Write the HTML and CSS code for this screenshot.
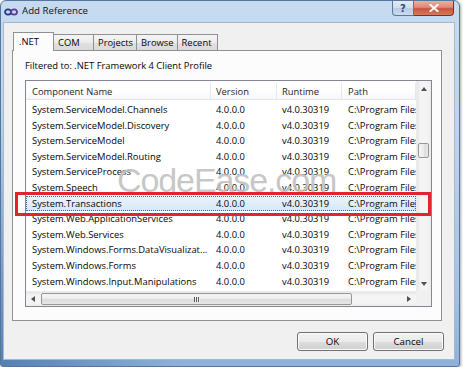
FILE: index.html
```html
<!DOCTYPE html>
<html lang="en">
<head>
    <meta charset="UTF-8">
    <title>Add Reference</title>
    <link rel="stylesheet" href="styles.css">
</head>
<body>
    <div class="window">
        <!-- Title bar -->
        <div class="titlebar">
            <svg class="app-icon" viewBox="0 0 14 8">
                <ellipse cx="4" cy="4" rx="3" ry="2.6" fill="none" stroke="#223a86" stroke-width="1.8"/>
                <ellipse cx="10" cy="4" rx="3" ry="2.6" fill="none" stroke="#5b3d96" stroke-width="1.8"/>
            </svg>
            <span class="title">Add Reference</span>
            <div class="caption-buttons">
                <div class="cap-btn help">?</div>
                <div class="cap-btn close">
                    <svg viewBox="0 0 10 8" width="10" height="8">
                        <path d="M1.5 1 L8.5 7 M8.5 1 L1.5 7" stroke="#fff" stroke-width="2" stroke-linecap="square"/>
                    </svg>
                </div>
            </div>
        </div>

        <div class="client">
            <!-- Tabs -->
            <div class="tabs">
                <div class="tab active">.NET</div>
                <div class="tab">COM</div>
                <div class="tab">Projects</div>
                <div class="tab">Browse</div>
                <div class="tab">Recent</div>
            </div>

            <div class="tab-panel">
                <div class="filter">Filtered to: .NET Framework 4 Client Profile</div>

                <div class="listbox">
                    <div class="list-main">
                        <div class="list-header">
                            <div class="cell name">Component Name</div>
                            <div class="cell version">Version</div>
                            <div class="cell runtime">Runtime</div>
                            <div class="cell path">Path</div>
                        </div>
                        <div id="rows" class="list-rows"></div>
                    </div>

                    <div class="vscroll">
                        <div class="sb-btn"><span class="arrow up"></span></div>
                        <div class="sb-track">
                            <div class="thumb-v"></div>
                        </div>
                        <div class="sb-btn"><span class="arrow down"></span></div>
                    </div>

                    <div class="hscroll">
                        <div class="sb-btn"><span class="arrow left"></span></div>
                        <div class="thumb-h"><span class="grip"></span></div>
                        <div class="sb-btn end"><span class="arrow right"></span></div>
                    </div>

                    <div class="corner"></div>
                </div>
            </div>

            <div class="actions">
                <button class="dlg-button">OK</button>
                <button class="dlg-button">Cancel</button>
            </div>
        </div>

        <!-- Overlays -->
        <div class="watermark">CodeEase.com</div>
        <div class="callout"></div>
    </div>

    <script>
        // Assembly list
        const components = [
            'System.ServiceModel.Channels',
            'System.ServiceModel.Discovery',
            'System.ServiceModel',
            'System.ServiceModel.Routing',
            'System.ServiceProcess',
            'System.Speech',
            'System.Transactions',
            'System.Web.ApplicationServices',
            'System.Web.Services',
            'System.Windows.Forms.DataVisualizat...',
            'System.Windows.Forms',
            'System.Windows.Input.Manipulations'
        ];
        const selected = 'System.Transactions';
        const rows = document.getElementById('rows');

        components.forEach(name => {
            const row = document.createElement('div');
            row.className = name === selected ? 'list-row selected' : 'list-row';
            row.innerHTML = `
                <div class="cell name">${name}</div>
                <div class="cell version">4.0.0.0</div>
                <div class="cell runtime">v4.0.30319</div>
                <div class="cell path">C:\\Program Files (x86)\\Reference Assemblies</div>
            `;
            rows.appendChild(row);
        });
    </script>
</body>
</html>
```

FILE: styles.css
```css
* {
    margin: 0;
    padding: 0;
    box-sizing: border-box;
}

body {
    background: #fff;
    font-family: "Open Sans", "Noto Sans", sans-serif;
    font-size: 9.4px;
    color: #050505;
}

.window {
    position: relative;
    width: 460px;
    height: 367px;
    border: 1px solid #56779d;
    border-radius: 6px 6px 3px 3px;
    background:
        radial-gradient(ellipse 180px 260px at 0% 100%, rgba(40, 85, 150, 0.55), rgba(40, 85, 150, 0) 100%),
        linear-gradient(to bottom, #c7dbf0 0%, #bcd3ec 40%, #a3c2e3 80%, #8db1d9 100%);
    box-shadow: 1px 1px 3px rgba(0, 0, 0, 0.35);
    display: flex;
    flex-direction: column;
}

/* Title bar */
.titlebar {
    height: 21px;
    display: flex;
    align-items: flex-start;
    padding-left: 3px;
    padding-right: 5px;
}

.app-icon {
    width: 14px;
    height: 8px;
    margin-top: 7px;
}

.title {
    margin-left: 4px;
    font-size: 9.7px;
    line-height: 20px;
    color: #111;
}

.caption-buttons {
    margin-left: auto;
    display: flex;
}

.cap-btn {
    height: 15px;
    display: flex;
    align-items: center;
    justify-content: center;
    border: 1px solid #5d7699;
    border-top: none;
}

.help {
    width: 22px;
    border-radius: 0 0 0 4px;
    background: linear-gradient(to bottom, #e3ecf6 0%, #cfdcec 50%, #b9cbe0 51%, #cbdcef 100%);
    color: #304c72;
    font-family: "DejaVu Sans", sans-serif;
    font-size: 10px;
    font-weight: bold;
}

.close {
    width: 40px;
    border-color: #7b3122;
    border-left: none;
    border-radius: 0 0 4px 0;
    background: linear-gradient(to bottom, #eab0a2 0%, #dc8a75 45%, #c8553a 55%, #d87a5e 100%);
}

/* Client area */
.client {
    height: 338px;
    margin: 0 4px 0 2px;
    border: 1px solid #a3b8d1;
    background: #f0f0f0;
    padding: 9px 0 8px 0;
    display: flex;
    flex-direction: column;
}

.tabs {
    display: flex;
    align-items: flex-end;
    height: 18px;
    margin-left: 9px;
}

.tab {
    height: 16px;
    min-width: 41px;
    padding: 0 3px 0 4px;
    line-height: 15px;
    border: 1px solid #8e9096;
    border-bottom: none;
    margin-right: -1px;
    background: linear-gradient(to bottom, #f4f4f4 0%, #ececec 50%, #e0e0e0 51%, #dadada 100%);
}

.tab.active {
    height: 19px;
    line-height: 18px;
    margin-bottom: -1px;
    padding-left: 5px;
    position: relative;
    z-index: 1;
    background: #fcfcfc;
}

.tab-panel {
    height: 271px;
    margin: 0 12px 0 8px;
    border: 1px solid #8e9096;
    background: #fcfcfc;
    padding: 7px 9px 13px 12px;
    display: flex;
    flex-direction: column;
}

.filter {
    line-height: 15px;
    margin-bottom: 7px;
}

/* List view */
.listbox {
    height: 227px;
    border: 1px solid #828790;
    background: #fff;
    display: grid;
    grid-template-columns: 1fr 15px;
    grid-template-rows: 1fr 15px;
}

.list-main {
    overflow: hidden;
}

.list-header,
.list-row {
    display: grid;
    grid-template-columns: 185px 66px 65px 74px;
}

.list-header {
    height: 19px;
    padding-top: 2px;
    line-height: 17px;
    border-bottom: 1px solid #e3e5e8;
    background: linear-gradient(to bottom, #ffffff 0%, #ffffff 50%, #f6f7f9 100%);
    color: #1e1e1e;
}

.list-header .cell {
    border-right: 1px solid #e5e8ec;
}

.list-rows {
    padding-top: 2px;
}

.list-row {
    height: 15.6px;
    line-height: 15.6px;
}

.list-row.selected {
    background: linear-gradient(to bottom, #eaf3fc 0%, #d7e8f9 100%);
    outline: 1px dotted #46668f;
    outline-offset: -1px;
}

.cell {
    white-space: nowrap;
    overflow: hidden;
    padding-left: 5px;
}

.cell.name,
.cell.path {
    padding-left: 6px;
}

/* Scroll bars */
.vscroll {
    grid-row: 1;
    grid-column: 2;
    display: flex;
    flex-direction: column;
    background: linear-gradient(to right, #e6e6e6 0%, #f4f4f4 25%, #f4f4f4 75%, #ebebeb 100%);
    border-left: 1px solid #ececec;
}

.hscroll {
    grid-row: 2;
    grid-column: 1;
    display: flex;
    align-items: center;
    background: linear-gradient(to bottom, #e6e6e6 0%, #f4f4f4 25%, #f4f4f4 75%, #ebebeb 100%);
    border-top: 1px solid #ececec;
}

.corner {
    grid-row: 2;
    grid-column: 2;
    background: #f0f0f0;
}

.sb-btn {
    width: 14px;
    height: 15px;
    flex: none;
    display: flex;
    align-items: center;
    justify-content: center;
}

.vscroll .sb-btn {
    width: auto;
}

.sb-btn.end {
    margin-left: auto;
}

.sb-track {
    flex: 1;
}

.arrow {
    width: 0;
    height: 0;
    border: 3px solid transparent;
}

.arrow.up {
    border-bottom: 4px solid #505050;
    border-top-width: 0;
}

.arrow.down {
    border-top: 4px solid #505050;
    border-bottom-width: 0;
}

.arrow.left {
    border-right: 4px solid #505050;
    border-left-width: 0;
}

.arrow.right {
    border-left: 4px solid #505050;
    border-right-width: 0;
}

.thumb-v {
    width: 11px;
    height: 15px;
    margin: 47px 0 0 1px;
    border: 1px solid #979797;
    border-radius: 2px;
    background: linear-gradient(to right, #f6f6f6 0%, #ececec 50%, #dcdcdc 51%, #e6e6e6 100%);
}

.thumb-h {
    width: 311px;
    height: 12px;
    margin-left: 1px;
    border: 1px solid #979797;
    border-radius: 2px;
    background: linear-gradient(to bottom, #f6f6f6 0%, #ececec 50%, #dcdcdc 51%, #e6e6e6 100%);
    display: flex;
    align-items: center;
    justify-content: center;
}

.grip {
    width: 6px;
    height: 5px;
    background: repeating-linear-gradient(to right, #5a5a5a 0, #5a5a5a 1px, #f2f2f2 1px, #f2f2f2 2px);
}

/* Dialog buttons */
.actions {
    display: flex;
    justify-content: flex-end;
    gap: 5px;
    margin-top: 11px;
    padding-right: 10px;
}

.dlg-button {
    width: 71px;
    height: 19px;
    border: 1px solid #707070;
    border-radius: 3px;
    background: linear-gradient(to bottom, #f2f2f2 0%, #ebebeb 50%, #dddddd 51%, #cfcfcf 100%);
    box-shadow: inset 0 0 0 1px #fbfbfb;
    font-family: inherit;
    font-size: 9.7px;
    color: #050505;
}

/* Overlays */
.watermark {
    position: absolute;
    left: 116px;
    top: 162px;
    font-family: "Liberation Sans", Arial, sans-serif;
    font-size: 34px;
    line-height: 1;
    letter-spacing: -1.1px;
    color: rgba(150, 150, 150, 0.55);
    text-shadow: 0 0 1px rgba(255, 255, 255, 0.8);
    pointer-events: none;
}

.callout {
    position: absolute;
    left: 14px;
    top: 191px;
    width: 416px;
    height: 24px;
    border: 3px solid #e2252c;
    pointer-events: none;
}
```
